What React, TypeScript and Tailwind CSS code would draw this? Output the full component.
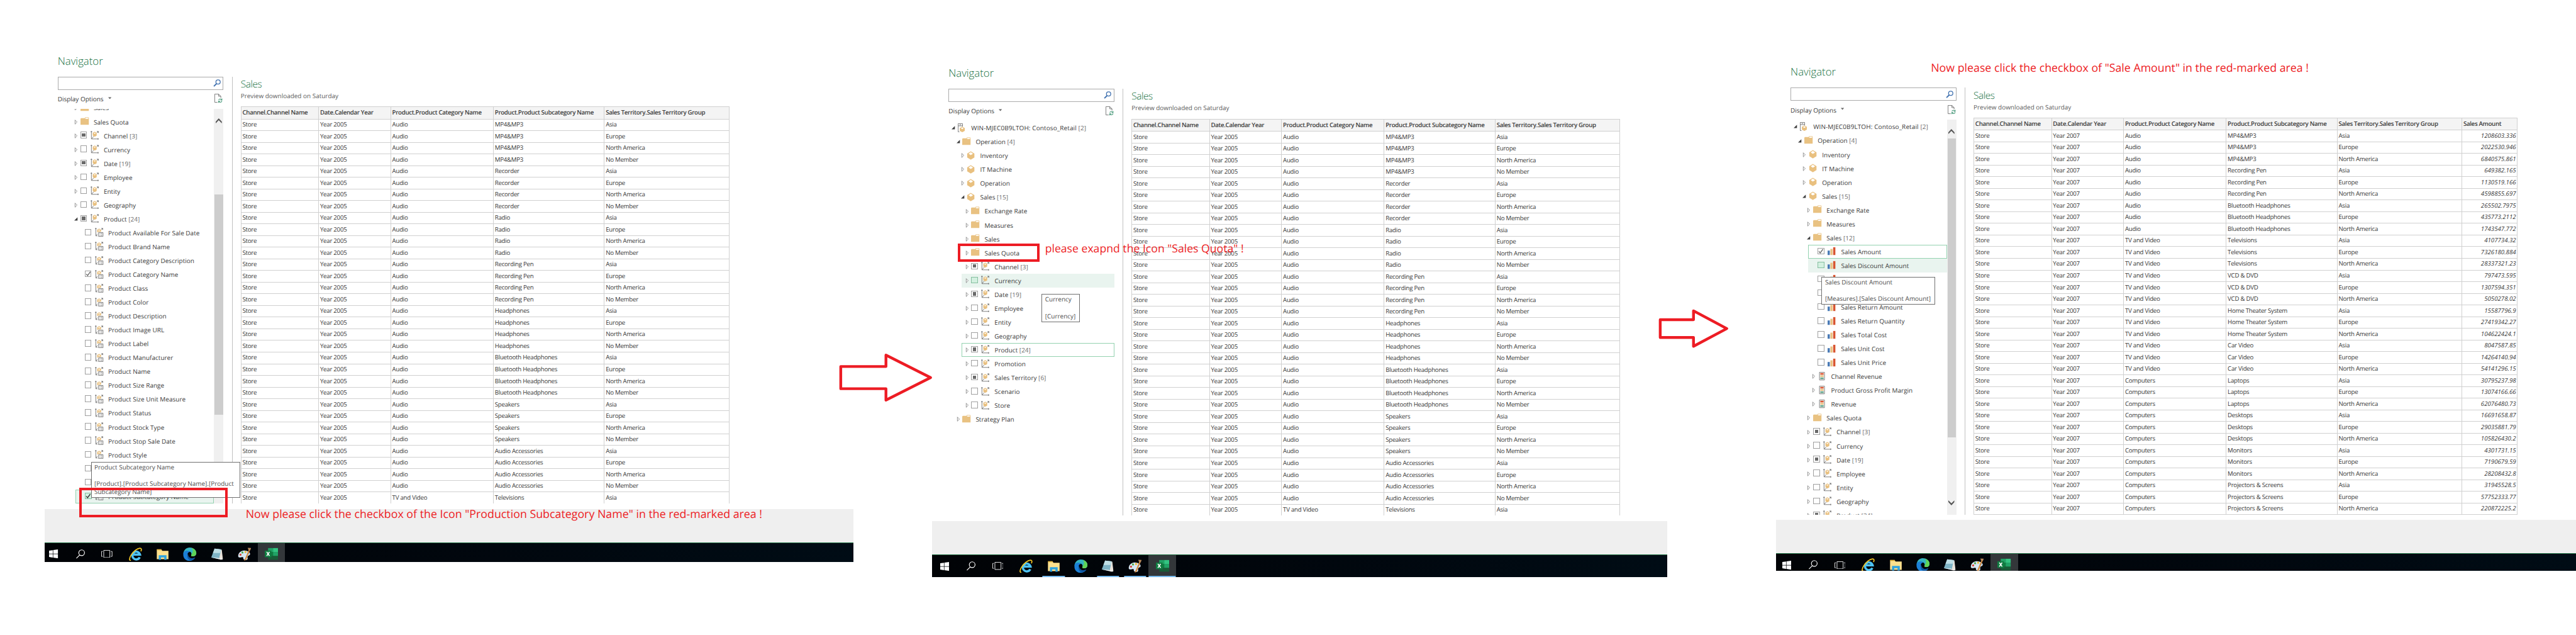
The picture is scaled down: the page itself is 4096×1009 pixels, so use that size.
import { ReactNode } from "react";

type Kind = "server" | "folder" | "cube" | "dim" | "attr" | "bars" | "kpi";
type Check = "off" | "on" | "mixed";
type Node = {
  level: 0 | 1 | 2 | 3 | 4;
  kind: Kind;
  label: string;
  open?: boolean;
  check?: Check;
  tone?: "hover" | "outline" | "both";
};

const LEVEL_MARGIN = ["ml-0", "ml-[8px]", "ml-[16px]", "ml-[24px]", "ml-[32px]"];

const TONES = {
  hover: "bg-[#e9f4ef] border border-[#e9f4ef]",
  outline: "border border-[#94d2b0]",
  both: "bg-[#e9f4ef] border border-[#94d2b0]",
};

const f = (level: Node["level"], label: string, open = false): Node => ({ level, kind: "folder", label, open });
const c = (label: string, open = false): Node => ({ level: 2, kind: "cube", label, open });
const d = (label: string, check: Check = "off", tone?: Node["tone"], open = false): Node => ({
  level: 3, kind: "dim", label, check, tone, open,
});
const a = (label: string, check: Check = "off", tone?: Node["tone"]): Node => ({
  level: 4, kind: "attr", label, check, tone,
});
const m = (label: string, check: Check = "off", tone?: Node["tone"]): Node => ({
  level: 4, kind: "bars", label, check, tone,
});
const k = (label: string): Node => ({ level: 4, kind: "kpi", label });

const ROOT_NODES: Node[] = [
  { level: 0, kind: "server", label: "WIN-MJEC0B9LTOH: Contoso_Retail [2]", open: true },
  f(1, "Operation [4]", true),
  c("Inventory"),
  c("IT Machine"),
  c("Operation"),
  c("Sales [15]", true),
  f(3, "Exchange Rate"),
  f(3, "Measures"),
];

const TREE_PRODUCT: Node[] = [
  f(3, "Sales"),
  f(3, "Sales Quota"),
  d("Channel [3]", "mixed"),
  d("Currency"),
  d("Date [19]", "mixed"),
  d("Employee"),
  d("Entity"),
  d("Geography"),
  d("Product [24]", "mixed", undefined, true),
  a("Product Available For Sale Date"),
  a("Product Brand Name"),
  a("Product Category Description"),
  a("Product Category Name", "on"),
  a("Product Class"),
  a("Product Color"),
  a("Product Description"),
  a("Product Image URL"),
  a("Product Label"),
  a("Product Manufacturer"),
  a("Product Name"),
  a("Product Size Range"),
  a("Product Size Unit Measure"),
  a("Product Status"),
  a("Product Stock Type"),
  a("Product Stop Sale Date"),
  a("Product Style"),
  a("Product Subcategory Code"),
  a("Product Subcategory Description"),
  a("Product Subcategory Name", "on", "both"),
];

const TREE_QUOTA: Node[] = [
  ...ROOT_NODES,
  f(3, "Sales"),
  f(3, "Sales Quota"),
  d("Channel [3]", "mixed"),
  d("Currency", "off", "hover"),
  d("Date [19]", "mixed"),
  d("Employee"),
  d("Entity"),
  d("Geography"),
  d("Product [24]", "mixed", "outline"),
  d("Promotion"),
  d("Sales Territory [6]", "mixed"),
  d("Scenario"),
  d("Store"),
  f(1, "Strategy Plan"),
];

const TREE_AMOUNT: Node[] = [
  ...ROOT_NODES,
  f(3, "Sales [12]", true),
  m("Sales Amount", "on", "outline"),
  m("Sales Discount Amount", "off", "hover"),
  m("Sales Discount Quantity"),
  m("Sales Quantity"),
  m("Sales Return Amount"),
  m("Sales Return Quantity"),
  m("Sales Total Cost"),
  m("Sales Unit Cost"),
  m("Sales Unit Price"),
  k("Channel Revenue"),
  k("Product Gross Profit Margin"),
  k("Revenue"),
  f(3, "Sales Quota"),
  d("Channel [3]", "mixed"),
  d("Currency"),
  d("Date [19]", "mixed"),
  d("Employee"),
  d("Entity"),
  d("Geography"),
  d("Product [24]", "mixed"),
];

const COLUMNS = [
  { title: "Channel.Channel Name", width: "w-[140px]" },
  { title: "Date.Calendar Year", width: "w-[130px]" },
  { title: "Product.Product Category Name", width: "w-[185px]" },
  { title: "Product.Product Subcategory Name", width: "w-[200px]" },
  { title: "Sales Territory.Sales Territory Group", width: "w-[225px]" },
  { title: "Sales Amount", width: "w-[100px]" },
];

const AUDIO_LINES = [
  "MP4&MP3", "Recorder", "Radio", "Recording Pen", "Headphones",
  "Bluetooth Headphones", "Speakers", "Audio Accessories",
];

const ROWS_2005: string[][] = [
  ...AUDIO_LINES.flatMap((line) =>
    ["Asia", "Europe", "North America", "No Member"].map((region) => ["Store", "Year 2005", "Audio", line, region]),
  ),
  ["Store", "Year 2005", "TV and Video", "Televisions", "Asia"],
];

const LINES_2007: [string, string, string[]][] = [
  ["Audio", "MP4&MP3", ["1208603.336", "2022530.946", "6840575.861"]],
  ["Audio", "Recording Pen", ["649382.165", "1130519.166", "4598855.697"]],
  ["Audio", "Bluetooth Headphones", ["265502.7975", "435773.2112", "1743547.772"]],
  ["TV and Video", "Televisions", ["4107734.32", "7326180.884", "28337321.23"]],
  ["TV and Video", "VCD & DVD", ["797473.595", "1307594.351", "5050278.02"]],
  ["TV and Video", "Home Theater System", ["15587796.9", "27419342.27", "104622424.1"]],
  ["TV and Video", "Car Video", ["8047587.85", "14264140.94", "54141296.15"]],
  ["Computers", "Laptops", ["30795237.98", "13074166.66", "62076480.73"]],
  ["Computers", "Desktops", ["16691658.87", "29035881.79", "105826430.2"]],
  ["Computers", "Monitors", ["4301731.15", "7190679.59", "28208432.8"]],
  ["Computers", "Projectors & Screens", ["31945528.5", "57752333.77", "220872225.2"]],
];

const ROWS_2007: string[][] = LINES_2007.flatMap(([category, line, amounts]) =>
  ["Asia", "Europe", "North America"].map((region, i) => ["Store", "Year 2007", category, line, region, amounts[i]]),
);

function NodeIcon({ kind }: { kind: Kind }) {
  switch (kind) {
    case "folder":
      return (
        <svg width="16" height="16" viewBox="0 0 16 16">
          <path d="M0 3L1 2H8.5V3.5H15V14H0Z" fill="#e9c282" />
          <path d="M8.5 3V1H14.5V3.5" fill="none" stroke="#e9c282" />
        </svg>
      );
    case "cube":
      return (
        <svg width="16" height="16" viewBox="0 0 16 16">
          <path d="M7.5 0.5L14 4.5V11.5L7.5 15.5L1 11.5V4.5Z" fill="#e9c07f" />
          <path d="M7.500 2L11.500 4.700L7.500 7.500L3.500 4.700Z" fill="#fff" />
        </svg>
      );
    case "server":
      return (
        <svg width="16" height="16" viewBox="0 0 16 16">
          <path d="M0.5 15.5V0.5H8.5V6M0.5 4.5H8.5M0.5 15.5H3M3 2.5H6" fill="none" stroke="#6f6f6f" />
          <path d="M8 6L12.5 8.5V13.5L8 16L3.5 13.5V8.5Z" fill="#e9c07f" />
          <path d="M8 7.5L10.5 9L8 10.5L5.5 9Z" fill="#fff" />
        </svg>
      );
    case "dim":
      return (
        <svg width="16" height="16" viewBox="0 0 16 16">
          <path d="M1.5 0V14.5H14.5M0 1.5H3M13.5 13V16M2 14L6 9.5M11.5 3.5L14 1" fill="none" stroke="#6f6f6f" />
          <path d="M11 0.5H14.5V4Z" fill="#6f6f6f" />
          <path d="M7.5 1.5L11 3.5V8.5L7.5 10.5L4 8.5V3.5Z" fill="#e9c07f" />
          <path d="M7.5 3L9.5 4.2L7.5 5.4L5.5 4.2Z" fill="#fff" />
        </svg>
      );
    case "attr":
      return (
        <svg width="16" height="16" viewBox="0 0 16 16">
          <path d="M1.5 0V14.5H4.5M0 1.5H3M2 14L4.5 11M11.5 3.5L14 1" fill="none" stroke="#6f6f6f" />
          <path d="M11 0.5H14.5V4Z" fill="#6f6f6f" />
          <path d="M7.5 1.5L11 3.5V7H5.5V8.5L4 8V3.5Z" fill="#e9c07f" />
          <path d="M7.5 3L9.5 4.2L7.5 5.4L5.5 4.2Z" fill="#fff" />
          <path d="M6.5 8.5H14.5V15.5H6.5Z" fill="#fff" stroke="#6f6f6f" />
          <path d="M8 10.5H9M10 10.5H13M8 13.5H9M10 13.5H13" stroke="#6f6f6f" />
        </svg>
      );
    case "bars":
      return (
        <svg width="16" height="16" viewBox="0 0 16 16">
          <path d="M0 7H4V15H0Z" fill="#4a7ab5" />
          <path d="M5 4H9V15H5Z" fill="#e9c282" />
          <path d="M10 1H14V15H10Z" fill="#d85430" />
        </svg>
      );
    case "kpi":
      return (
        <svg width="16" height="16" viewBox="0 0 16 16">
          <path d="M3.5 0.5H12.5V14.5H3.5Z" fill="#fff" stroke="#6f6f6f" />
          <path d="M5 2H11V5H5Z" fill="#d85430" />
          <path d="M5 6H11V9H5Z" fill="#e9c282" />
          <path d="M5 10H11V13H5Z" fill="#5fa38a" />
        </svg>
      );
  }
}

function Expander({ open }: { open: boolean }) {
  return open ? (
    <svg width="7" height="9" viewBox="0 0 7 9">
      <path d="M6 1.5V7.5H0Z" fill="#404040" />
    </svg>
  ) : (
    <svg width="7" height="9" viewBox="0 0 7 9">
      <path d="M1.5 0.8L5.2 4.5L1.5 8.2Z" fill="#fff" stroke="#7a7a7a" strokeWidth="0.9" />
    </svg>
  );
}

function CheckBox({ state, hot }: { state: Check; hot: boolean }) {
  return (
    <span
      className={
        "flex h-[12px] w-[12px] shrink-0 items-center justify-center border " +
        (hot ? "border-[#86bfa0] bg-[#d3f0e0]" : "border-[#a0a0a0] bg-white")
      }
    >
      {state === "mixed" && <span className="h-[6px] w-[6px] bg-[#6a6a6a]" />}
      {state === "on" && (
        <svg width="10" height="10" viewBox="0 0 10 10">
          <path d="M1.2 5L3.8 7.8L8.8 1" fill="none" stroke={hot ? "#333" : "#6a6a6a"} strokeWidth="1.6" />
        </svg>
      )}
    </span>
  );
}

function TreeRow({ node }: { node: Node }) {
  const { level, kind, label, open, check, tone } = node;
  const leaf = kind === "attr" || kind === "bars";
  const [name, count] = label.split(/ (?=\[)/);
  return (
    <div className={`${LEVEL_MARGIN[level]} h-[25px] ${tone ? TONES[tone] : ""}`}>
      <div className={`flex h-full items-center ${tone ? "-ml-px" : ""}`}>
        <span className="w-[17px] shrink-0 pl-[6px]">{!leaf && <Expander open={!!open} />}</span>
        {check && (
          <span className="-mt-[2px] w-[18px] shrink-0">
            <CheckBox state={check} hot={tone === "hover" || tone === "both"} />
          </span>
        )}
        <span className="-mt-[1px] w-[24px] shrink-0">
          <NodeIcon kind={kind} />
        </span>
        <span className={`pt-px whitespace-nowrap text-[#3c3c3c] ${kind === "server" ? "tracking-[0.140px]" : "tracking-[0.030px]"}`}>
          {name}
          {count && <span className="text-[#6c6c6c]"> {count}</span>}
        </span>
      </div>
    </div>
  );
}

function Chevron({ down = false }: { down?: boolean }) {
  return (
    <svg width="11" height="9" viewBox="0 0 11 9" className={`mx-auto block ${down ? "rotate-180" : ""}`}>
      <path d="M0 6L5.5 0L11 6V9L5.5 3.5L0 9Z" fill="#555" />
    </svg>
  );
}

function Navigator({ tree, offset, scroll }: { tree: Node[]; offset: string; scroll?: "middle" | "top" }) {
  return (
    <div className="w-[299px]">
      <div className="flex h-[24px] items-center justify-end border border-[#ababab] pr-[4px]">
        <svg width="14" height="14" viewBox="0 0 14 14" fill="none" stroke="#4172b0">
          <circle cx="8.8" cy="4.8" r="3.9" strokeWidth="1.5" />
          <path d="M6 8L1.2 12.6" strokeWidth="2.2" />
        </svg>
      </div>
      <div className="mt-[8px] flex h-[16px] items-center">
        <span className="pt-px text-[#3c3c3c]">Display Options</span>
        <svg width="6" height="4" viewBox="0 0 6 4" className="ml-[8px] -mt-[3px]">
          <path d="M0 0.5H6L3 4Z" fill="#666" />
        </svg>
        <svg width="15" height="17" viewBox="0 0 15 17" fill="none" className="mr-[1px] ml-auto">
          <path d="M5.5 15.5H0.5V0.5H7.5L11.5 4.5V7.5M7.5 0.5V4.5H11.5" stroke="#6a6a6a" />
          <path d="M7.5 11.5C8 9 12 8.5 13 11M13.5 8.5V11.3H10.8M13.5 13C13 15.8 9 16 8 13.8M7.3 16.2V13.5H10" stroke="#4c9b7d" strokeWidth="1.2" />
        </svg>
      </div>
      <div className="mt-[10px] flex h-[711px] overflow-hidden">
        <div className={`flex-1 ${offset}`}>
          {tree.map((node) => (
            <TreeRow key={node.label + node.kind} node={node} />
          ))}
        </div>
        {scroll && (
          <div className="h-[711px] w-[17px] shrink-0 bg-[#f0f0f0] pt-[17px]">
            <Chevron />
            <div className={`mx-[1px] bg-[#cdcdcd] ${scroll === "middle" ? "mt-[128px] h-[397px]" : "mt-[8px] h-[538px]"}`} />
            {scroll === "top" && (
              <div className="pt-[114px]">
                <Chevron down />
              </div>
            )}
          </div>
        )}
      </div>
    </div>
  );
}

function Preview({ rows }: { rows: string[][] }) {
  const columns = COLUMNS.slice(0, rows[0].length);
  return (
    <div className="shrink-0">
      <div className="flex h-[27px] items-center text-[17.500px] font-light tracking-[-0.500px] text-[#217346]">
        Sales
      </div>
      <div className="flex h-[16px] items-center text-[#5e5e5e]">Preview downloaded on Saturday</div>
      <div className="mt-[11px] h-[715px] overflow-hidden border-t border-l border-[#d0d0d0] text-[11px]">
        <div className="flex h-[22px] bg-[#f4f4f4] font-semibold tracking-[-0.360px] text-[#3c3c3c]">
          {columns.map((col) => (
            <div key={col.title} className={`${col.width} flex items-center border-r border-b border-[#d0d0d0] pl-[2px] whitespace-nowrap`}>
              {col.title}
            </div>
          ))}
        </div>
        {rows.map((row, r) => (
          <div key={r} className="flex h-[21px] text-[#3a3a3a]">
            {row.map((cell, i) => (
              <div
                key={i}
                className={`${columns[i].width} flex items-center border-r border-b border-[#d0d0d0] whitespace-nowrap ${
                  i === 5 ? "justify-end pr-[2px] italic" : "pl-[2px] tracking-[-0.300px]"
                }`}
              >
                {cell}
              </div>
            ))}
          </div>
        ))}
      </div>
    </div>
  );
}

const APP_ICONS: { name: string; art: ReactNode }[] = [
  {
    name: "explorer-e",
    art: (
      <>
        <path d="M19.500 17.500A7 7 0 1 1 20 12.800H8" fill="none" stroke="#4ec3f3" strokeWidth="4" />
        <path d="M3.500 23C0 24 0.500 19 4 13.500C8 7 15 1.500 19.500 1.200C23 1 23 4 21.500 7" fill="none" stroke="#f3c623" strokeWidth="1.900" />
      </>
    ),
  },
  {
    name: "folder",
    art: (
      <>
        <path d="M1.500 4H10L11.500 6H22.500V21H1.500Z" fill="#fde08d" />
        <path d="M1.500 3H10V5H1.500Z" fill="#e3b33c" />
        <path d="M5 22V14H19V22H15V18H9V22Z" fill="#2fa3e0" />
      </>
    ),
  },
  {
    name: "edge",
    art: (
      <>
        <path d="M0.500 12C1 4 6 0 12 0C19 0 24 5 24 10C24 14 21 16 18 16C15 16 14 15 15 13C16 9 13 7 10 7C5 7 1 9 0.500 12Z" fill="#35b5c1" />
        <path d="M15 0.500C21 2 24 6 24 10C24 14 21 16 18 16C15 16 14 15 15 13C17 10 20 5 15 0.500Z" fill="#5fd357" />
        <path d="M0.500 12C0.500 5 10 4 13 8C8 8 7 13 9 17C11 21 18 22 22 18C20 22 16 24 12 24C5 24 0 19 0.500 12Z" fill="#1b7fd6" />
        <path d="M9 11C6 16 9 24 16 23C19 22.500 21 20 22 18C16 21 9 19 9 11Z" fill="#0e559f" />
      </>
    ),
  },
  {
    name: "notepad",
    art: (
      <>
        <path d="M7 2L20 4L22 21L17 22Z" fill="#e9e4dc" />
        <path d="M7 2L19 3.500L15 21L1 18Z" fill="#7fb4c6" />
        <path d="M7 2L19 3.500L17.500 10L4 10Z" fill="#bfdfe6" />
        <path d="M1 18L15 21L21 22V20L15 19Z" fill="#f3f3f3" />
      </>
    ),
  },
  {
    name: "paint",
    art: (
      <>
        <path d="M1 14C2 7 10 4 16 6C22 8 24 12 21 14C18 15 17 17 18 20C17 24 9 23 10 19C10 16 7 18 4 18C1 18 0.500 16 1 14Z" fill="#d5e6f2" />
        <circle cx="5" cy="13" r="1.800" fill="#d9402f" />
        <circle cx="8.500" cy="9" r="1.800" fill="#49a847" />
        <circle cx="14" cy="8" r="1.900" fill="#f0b429" />
        <circle cx="18.500" cy="11" r="1.600" fill="#3374c2" />
        <path d="M20 4L22 5L15 22L11.500 24Z" fill="#d98a3a" />
        <path d="M18 0.500L24 1L22.500 5.500L19.500 4.500Z" fill="#b98a5c" />
      </>
    ),
  },
  {
    name: "excel",
    art: (
      <>
        <path d="M6 1H24V22H6Z" fill="#185c37" />
        <path d="M6 1H15V8H6Z" fill="#21a366" />
        <path d="M15 1H24V8H15Z" fill="#33c481" />
        <path d="M6 8H15V15H6Z" fill="#107c41" />
        <path d="M15 8H24V15H15Z" fill="#21a366" />
        <path d="M0 5.500H12V17.500H0Z" fill="#107c41" />
        <path d="M3.500 8L8.500 15M8.500 8L3.500 15" stroke="#fff" strokeWidth="1.700" />
      </>
    ),
  },
];

function Taskbar({ height, lead, running = false }: { height: string; lead: string; running?: boolean }) {
  return (
    <div className={`flex overflow-hidden bg-linear-to-r from-[#010306] to-[#000c15] ${height} ${lead}`}>
      <div className="flex h-[40px] w-[40px] shrink-0 items-center">
        <svg width="16" height="16" viewBox="0 0 16 16" fill="#fff">
          <path d="M0 2.300L6.700 1.300V7.600H0ZM7.500 1.200L16 0V7.600H7.500ZM0 8.400H6.700V14.700L0 13.700ZM7.500 8.400H16V16L7.500 14.800Z" />
        </svg>
      </div>
      <div className="flex h-[40px] w-[48px] shrink-0 items-center pl-[8px]">
        <svg width="16" height="17" viewBox="0 0 16 17" fill="none" stroke="#fff" strokeWidth="1.300">
          <circle cx="10" cy="6" r="5.200" />
          <path d="M6.500 10L0.500 16" />
        </svg>
      </div>
      <div className="flex h-[40px] w-[43px] shrink-0 items-center pl-[6px]">
        <svg width="20" height="14" viewBox="0 0 20 14" fill="none" stroke="#fff">
          <path d="M4.500 0.500H15.500V13.500H4.500ZM2.500 2.500H0.500V11.500H2.500M17.500 2.500H19.500V11.500H17.500" />
        </svg>
      </div>
      {APP_ICONS.map((icon) => {
        const active = icon.name === "excel";
        const lit = running && ["folder", "notepad", "paint", "excel"].includes(icon.name);
        return (
          <div key={icon.name} className={`relative flex h-[40px] w-[49px] shrink-0 items-center justify-center ${active ? "bg-[#33373a]" : ""}`}>
            <svg width="24" height="24" viewBox="0 0 24 24">{icon.art}</svg>
            {lit && <span className={`absolute bottom-0 left-1/2 h-[2px] -translate-x-1/2 bg-[#76b9ed] ${active ? "w-full" : "w-[40px]"}`} />}
          </div>
        );
      })}
    </div>
  );
}

function Panel({
  className, inset, tree, offset, scroll, rows, bar, lead, running,
}: {
  className: string; inset: string; tree: Node[]; offset: string; scroll?: "middle" | "top";
  rows: string[][]; bar: string; lead: string; running?: boolean;
}) {
  return (
    <section className={`shrink-0 ${className}`}>
      <div className={`pt-[93px] ${inset}`}>
        <h1 className="mb-[13px] flex h-[32px] items-center text-[19px] font-light text-[#217346]">Navigator</h1>
        <div className="flex h-[769px] overflow-hidden">
          <Navigator tree={tree} offset={offset} scroll={scroll} />
          <div className="mr-[15px] ml-[15px] w-px shrink-0 bg-[#c0c0c0]" />
          <Preview rows={rows} />
        </div>
      </div>
      <div className="mt-[10px] h-[60px] bg-[#efefef]" />
      <div className="h-px bg-[#217346]" />
      <Taskbar height={bar} lead={lead} running={running} />
    </section>
  );
}

function Tooltip({ className, lines }: { className: string; lines: string[] }) {
  return (
    <div className={`absolute border border-[#707070] bg-white pt-[1px] pl-[5px] leading-[15px] text-[#505050] ${className}`}>
      {lines.map((line, i) => (
        <div key={i} className="h-[15px] whitespace-nowrap">{line}</div>
      ))}
    </div>
  );
}

function Note({ className, children }: { className: string; children: ReactNode }) {
  return <p className={`absolute leading-[30px] whitespace-nowrap text-[#ed1c24] ${className}`}>{children}</p>;
}

export default function App() {
  return (
    <div className="h-[1009px] w-[4096px] overflow-hidden bg-white">
      <main className="relative flex h-[1144px] w-[4644px] [zoom:0.882] overflow-hidden bg-white font-['Open_Sans','Noto_Sans',sans-serif] text-[11.300px] [text-rendering:geometricPrecision]">
        <Panel className="ml-[80px] w-[1459px]" inset="pl-[24px]" tree={TREE_PRODUCT} offset="-mt-[14px]" scroll="middle" rows={ROWS_2005} bar="h-[35px]" lead="pl-[9px]" />
        <Panel className="mt-[22px] ml-[141px] w-[1326px]" inset="pl-[30px]" tree={TREE_QUOTA} offset="mt-0" rows={ROWS_2005} bar="h-[40px]" lead="pl-[15px]" running />
        <Panel className="mt-[20px] ml-[196px] w-[1442px]" inset="pl-[26px]" tree={TREE_AMOUNT} offset="mt-0" scroll="top" rows={ROWS_2007} bar="h-[31px]" lead="pl-[11px]" />

        <Tooltip className="top-[832px] left-[164px] h-[65px] w-[269px]" lines={["Product Subcategory Name", "", "[Product].[Product Subcategory Name].[Product", "Subcategory Name]"]} />
        <Tooltip className="top-[530px] left-[1878px] h-[50px] w-[69px]" lines={["Currency", "", "[Currency]"]} />
        <Tooltip className="top-[499px] left-[3284px] h-[50px] w-[205px]" lines={["Sales Discount Amount", "", "[Measures].[Sales Discount Amount]"]} />

        <div className="absolute top-[879px] left-[143px] h-[53px] w-[267px] border-[5px] border-[#ed1c24]" />
        <div className="absolute top-[439px] left-[1727px] h-[33px] w-[147px] border-[5px] border-[#ed1c24]" />

        <svg className="absolute top-[634px] left-[1510px]" width="174" height="94" viewBox="1510 634 174 94">
          <path d="M1515.500 660.500H1597V640L1677.500 680.500L1597 721V700.500H1515.500Z" fill="none" stroke="#ed1c24" strokeWidth="5" strokeLinejoin="round" />
        </svg>
        <svg className="absolute top-[554px] left-[2988px]" width="132" height="76" viewBox="2988 554 132 76">
          <path d="M2993.500 575.500H3053.500V559.500L3113.500 591.500L3053.500 623.500V607.500H2993.500Z" fill="none" stroke="#ed1c24" strokeWidth="5" strokeLinejoin="round" />
        </svg>

        <Note className="top-[911px] left-[443px] text-[20.200px]">Now please click the checkbox of the Icon "Production Subcategory Name" in the red-marked area !</Note>
        <Note className="top-[433px] left-[1884px] text-[20px]">please exapnd the Icon "Sales Quota" !</Note>
        <Note className="top-[108px] left-[3481px] text-[20.150px]">Now please click the checkbox of "Sale Amount" in the red-marked area !</Note>
      </main>
    </div>
  );
}
